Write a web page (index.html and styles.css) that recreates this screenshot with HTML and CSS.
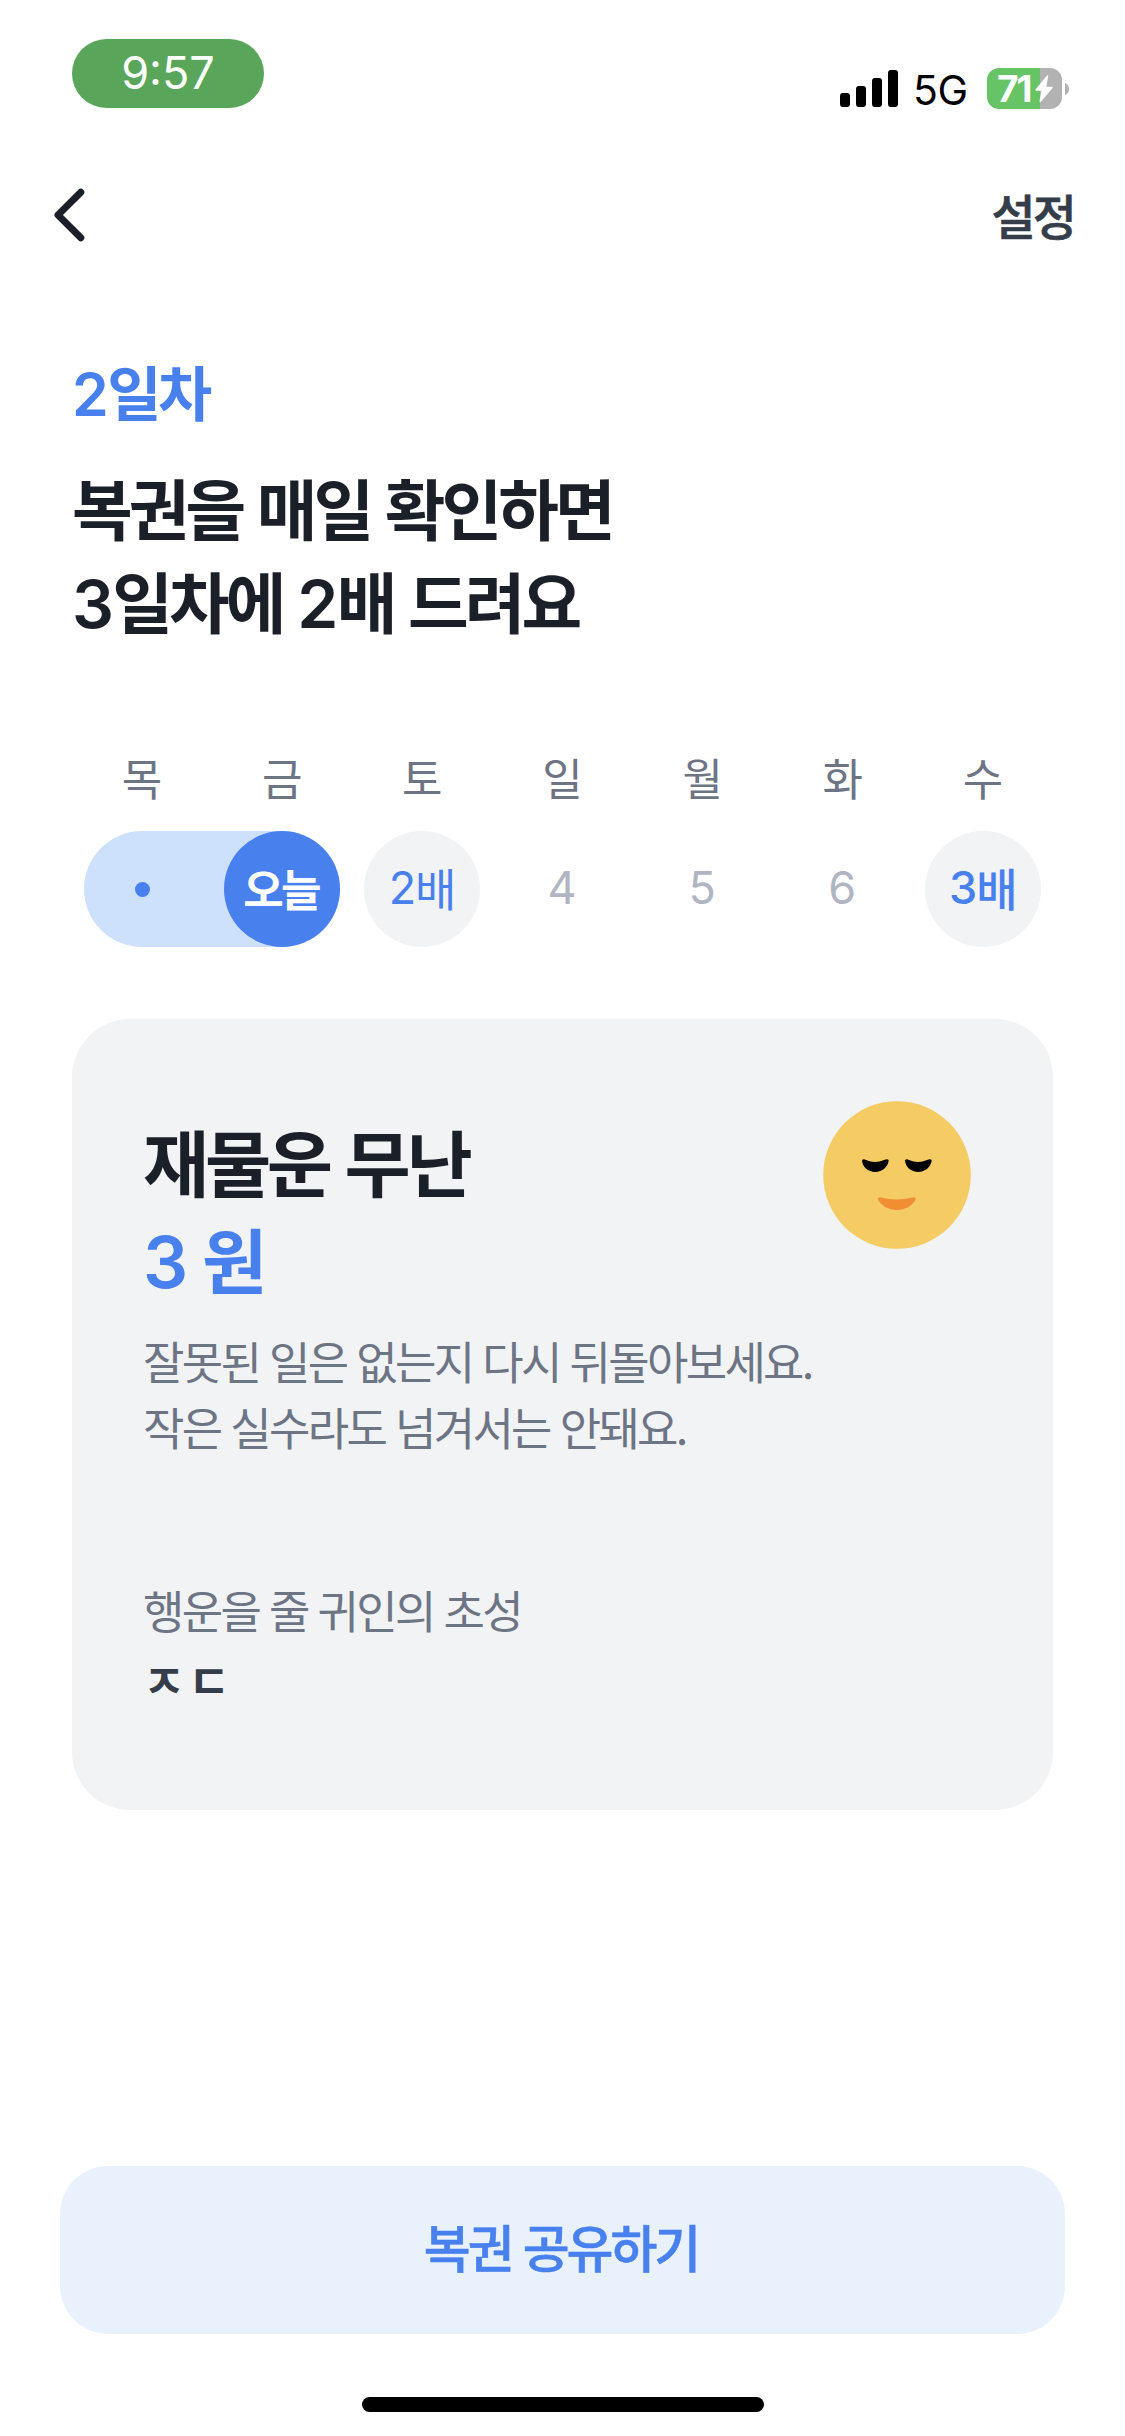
FILE: index.html
```html
<!DOCTYPE html>
<html lang="ko">
<head>
<meta charset="utf-8">
<title>복권</title>
<link rel="stylesheet" href="styles.css">
</head>
<body>
<div class="screen">
  <header class="status">
    <div class="time">9:57</div>
    <div class="status-icons">
      <svg class="signal" width="58" height="37" viewBox="0 0 58 37">
        <rect x="0" y="23" width="10" height="14" rx="3"/>
        <rect x="16" y="16" width="10" height="21" rx="3"/>
        <rect x="32" y="8" width="10" height="29" rx="3"/>
        <rect x="48" y="0" width="10" height="37" rx="3"/>
      </svg>
      <span class="network">5G</span>
      <div class="battery">
        <div class="cell">
          <span class="level">71</span>
          <svg width="18" height="28" viewBox="0 0 18 28"><path d="M12.5 1 L1 15 H7.3 L5.2 26.5 L17 12.5 H10.6 Z" fill="#fff" stroke="#fff" stroke-width="1.4" stroke-linejoin="round"/></svg>
        </div>
        <svg width="4" height="12" viewBox="0 0 4 12"><path d="M0 0 Q4 1.6 4 6 Q4 10.4 0 12 Z" fill="#b2b2b2"/></svg>
      </div>
    </div>
  </header>

  <nav class="nav">
    <svg width="31" height="54" viewBox="0 0 31 54"><path d="M26.8 4.2 L4 27 L26.8 49.8" fill="none" stroke="#1b1f28" stroke-width="7" stroke-linecap="round" stroke-linejoin="round"/></svg>
    <span class="settings">설정</span>
  </nav>

  <main class="content">
    <p class="day-count"><span class="num">2</span>일차</p>
    <h1 class="headline">복권을 매일 확인하면<br><span class="num">3</span>일차에 <span class="num">2</span>배 드려요</h1>

    <section class="week">
      <div class="row names">
        <span>목</span><span>금</span><span>토</span><span>일</span><span>월</span><span>화</span><span>수</span>
      </div>
      <div class="row days">
        <div class="streak">
          <span class="day"><i class="dot"></i></span>
          <span class="day today">오늘</span>
        </div>
        <span class="day bonus"><span class="num">2</span>배</span>
        <span class="day"><span class="num">4</span></span>
        <span class="day"><span class="num">5</span></span>
        <span class="day"><span class="num">6</span></span>
        <span class="day bonus strong"><span class="num">3</span>배</span>
      </div>
    </section>

    <section class="card">
      <div class="card-head">
        <div>
          <h2 class="fortune">재물운 무난</h2>
          <p class="amount"><span class="num">3</span> 원</p>
        </div>
        <svg class="face" width="148" height="148" viewBox="0 0 148 148">
          <circle cx="74" cy="74" r="73.8" fill="#f5cb64"/>
          <path d="M39 59.5 Q40 57.5 43 59 Q52 63 61 59 Q65 57.3 65.7 59.5 C65 66 59 71 52.3 71 C45 71 39.5 66 39 59.5 Z"/>
          <path d="M82 59.5 Q83 57.5 86 59 Q95 63 104 59 Q108 57.3 108.7 59.5 C108 66 102 71 95.3 71 C88 71 82.5 66 82 59.5 Z"/>
          <path d="M54.8 98 Q55 95.7 58 96.4 Q74 100.5 89 96.4 Q92.5 95.6 92.8 98 C89.5 105 82 109 74 109 C66 109 58 105 54.8 98 Z" fill="#f18e34"/>
        </svg>
      </div>
      <p class="advice">잘못된 일은 없는지 다시 뒤돌아보세요.<br>작은 실수라도 넘겨서는 안돼요.</p>
      <p class="label">행운을 줄 귀인의 초성</p>
      <p class="initials">ㅈㄷ</p>
    </section>
  </main>

  <footer class="footer">
    <button class="share">복권 공유하기</button>
    <div class="home-bar"></div>
  </footer>
</div>
</body>
</html>
```
FILE: styles.css
```css
* { box-sizing: border-box; margin: 0; padding: 0; }

body {
  background: #fff;
  font-family: "Noto Sans CJK KR", sans-serif;
  color: #1b1f28;
}

.screen {
  width: 1125px;
  height: 2436px;
  display: flex;
  flex-direction: column;
}

.settings, .day-count, .headline, .day, .fortune, .amount, .advice, .label, .share {
  letter-spacing: -0.06em;
}

.num {
  font-family: "Inter", sans-serif;
  line-height: 0;
  letter-spacing: -0.025em;
}

/* status bar */
.status {
  height: 160px;
  padding: 39px 56px 0 72px;
  display: flex;
  justify-content: space-between;
  align-items: flex-start;
  font-family: "Inter", sans-serif;
}
.time {
  width: 192px;
  height: 69px;
  border-radius: 34.5px;
  background: #59a65a;
  color: #fff;
  font-size: 45px;
  line-height: 68px;
  text-align: center;
}
.status-icons {
  display: flex;
  align-items: center;
  height: 41px;
  margin-top: 29px;
}
.network {
  margin-left: 15px;
  width: 58px;
  font-size: 41px;
  line-height: 41px;
  padding-top: 4px;
  color: #000;
  letter-spacing: -0.5px;
}
.battery { display: flex; align-items: center; gap: 3px; margin-left: 16px; }
.cell {
  width: 75px;
  height: 41px;
  border-radius: 12px;
  background: linear-gradient(90deg, #66c466 53px, #b2b2b2 53px);
  display: flex;
  align-items: center;
  padding-left: 10px;
}
.level {
  width: 38px;
  font-size: 37px;
  font-weight: 700;
  line-height: 42px;
  color: #fff;
  letter-spacing: -2px;
}

/* navigation */
.nav {
  height: 110px;
  padding: 0 51px 0 54px;
  display: flex;
  justify-content: space-between;
  align-items: center;
}
.settings {
  padding-bottom: 3px;
  font-size: 48px;
  font-weight: 500;
  line-height: 70px;
  color: #353d4a;
  -webkit-text-stroke: 0.6px #353d4a;
}

/* headline */
.content { padding: 79px 72px 0; flex: 1; }
.day-count {
  font-size: 59px;
  line-height: 84px;
  font-weight: 700;
  color: #4880ee;
}
.headline {
  margin-top: 27px;
  font-size: 66px;
  line-height: 93px;
  font-weight: 700;
}
.day-count .num, .headline .num, .amount .num { font-weight: 600; }

/* week strip */
.week { margin-top: 97px; padding: 0 12px; }
.row { display: flex; justify-content: space-between; }
.names span {
  width: 116px;
  text-align: center;
  font-size: 44px;
  line-height: 68px;
  color: #6d7585;
}
.days { margin-top: 20px; }
.streak {
  width: 256px;
  display: flex;
  justify-content: space-between;
  border-radius: 58px;
  background: #cde0fc;
}
.day {
  width: 116px;
  height: 116px;
  padding: 0 2px 3px 0;
  border-radius: 50%;
  display: flex;
  align-items: center;
  justify-content: center;
  font-size: 45px;
  line-height: 60px;
  color: #b0b6c1;
}
.dot { width: 15px; height: 15px; margin: 3px 0 0 2px; border-radius: 50%; background: #4880ee; }
.today { background: #4880ee; color: #fff; font-size: 44px; font-weight: 700; }
.bonus { background: #f1f3f5; color: #4880ee; }
.strong { font-weight: 500; }

/* fortune card */
.card {
  margin-top: 72px;
  height: 791px;
  padding: 82px 72px 0 71px;
  border-radius: 58px;
  background: #f1f3f5;
}
.card-head { display: flex; justify-content: space-between; padding-right: 10px; }
.fortune {
  margin-top: 10px;
  font-size: 72px;
  line-height: 98px;
  font-weight: 700;
}
.amount {
  font-size: 71px;
  line-height: 96px;
  font-weight: 700;
  color: #4880ee;
}
.advice {
  margin-top: 23px;
  font-size: 45px;
  line-height: 66px;
  color: #6d7585;
}
.label {
  margin-top: 117px;
  font-size: 45px;
  line-height: 66px;
  color: #6d7585;
}
.initials {
  margin-top: 2px;
  font-size: 46px;
  line-height: 66px;
  font-weight: 700;
  letter-spacing: 0.06em;
  color: #353d4a;
}

/* footer */
.footer {
  height: 270px;
  padding: 0 60px;
  display: flex;
  flex-direction: column;
  align-items: center;
}
.share {
  width: 100%;
  height: 168px;
  padding: 0 3px 9px 0;
  border: 0;
  border-radius: 48px;
  background: #e9f1fd;
  color: #4880ee;
  font-family: inherit;
  font-size: 51px;
  font-weight: 500;
  -webkit-text-stroke: 0.6px #4880ee;
}
.home-bar {
  margin-top: 63px;
  width: 402px;
  height: 15px;
  border-radius: 8px;
  background: #000;
}
```
